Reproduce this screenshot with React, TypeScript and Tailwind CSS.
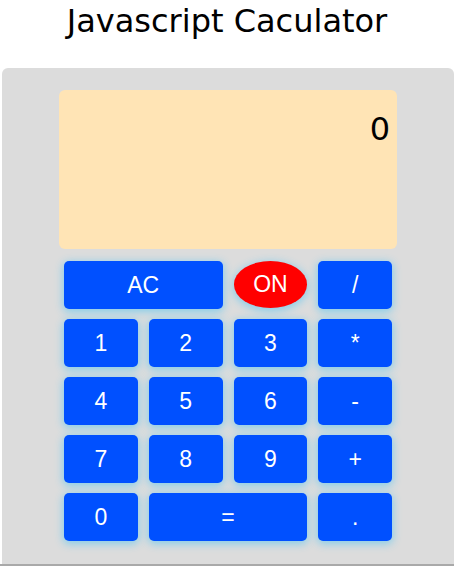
const keys: { label: string; span?: boolean; round?: boolean }[] = [
  { label: "AC", span: true },
  { label: "ON", round: true },
  { label: "/" },
  { label: "1" },
  { label: "2" },
  { label: "3" },
  { label: "*" },
  { label: "4" },
  { label: "5" },
  { label: "6" },
  { label: "-" },
  { label: "7" },
  { label: "8" },
  { label: "9" },
  { label: "+" },
  { label: "0" },
  { label: "=", span: true },
  { label: "." },
];

function App() {
  return (
    <div className="min-h-[566px] bg-white font-['DejaVu_Sans',sans-serif]">
      <h1 className="h-[68px] pt-[3px] text-center text-[32px] font-normal leading-[37px] text-black">
        Javascript Caculator
      </h1>

      <div className="ml-[2px] flex flex-col items-center rounded-t-md bg-[#dcdcdc] pt-[22px] pb-[23px]">
        <div className="h-[159px] w-[338px] rounded-md bg-[#ffe4b5] pt-[21px] pr-[7px] text-right text-[32px] leading-[37px] text-black">
          0
        </div>

        {/* keypad */}
        <div className="mt-[12px] grid w-[328px] grid-cols-4 gap-x-[11px] gap-y-[10px]">
          {keys.map((key) => (
            <button
              key={key.label}
              type="button"
              className={
                key.round
                  ? "h-[47px] rounded-[50%] bg-[#ff0000] font-['Liberation_Sans',sans-serif] text-[23px] text-white shadow-[0_2px_8px_1px_#87ceeb]"
                  : key.span
                    ? "col-span-2 h-[48px] rounded-[5px] bg-[#0050ff] font-['Liberation_Sans',sans-serif] text-[23px] text-white shadow-[0_2px_8px_1px_#87ceeb]"
                    : "h-[48px] rounded-[5px] bg-[#0050ff] font-['Liberation_Sans',sans-serif] text-[23px] text-white shadow-[0_2px_8px_1px_#87ceeb]"
              }
            >
              {key.label}
            </button>
          ))}
        </div>
      </div>

      <div className="h-[2px] bg-[#a9a9a9]" />
    </div>
  );
}

export default App;
